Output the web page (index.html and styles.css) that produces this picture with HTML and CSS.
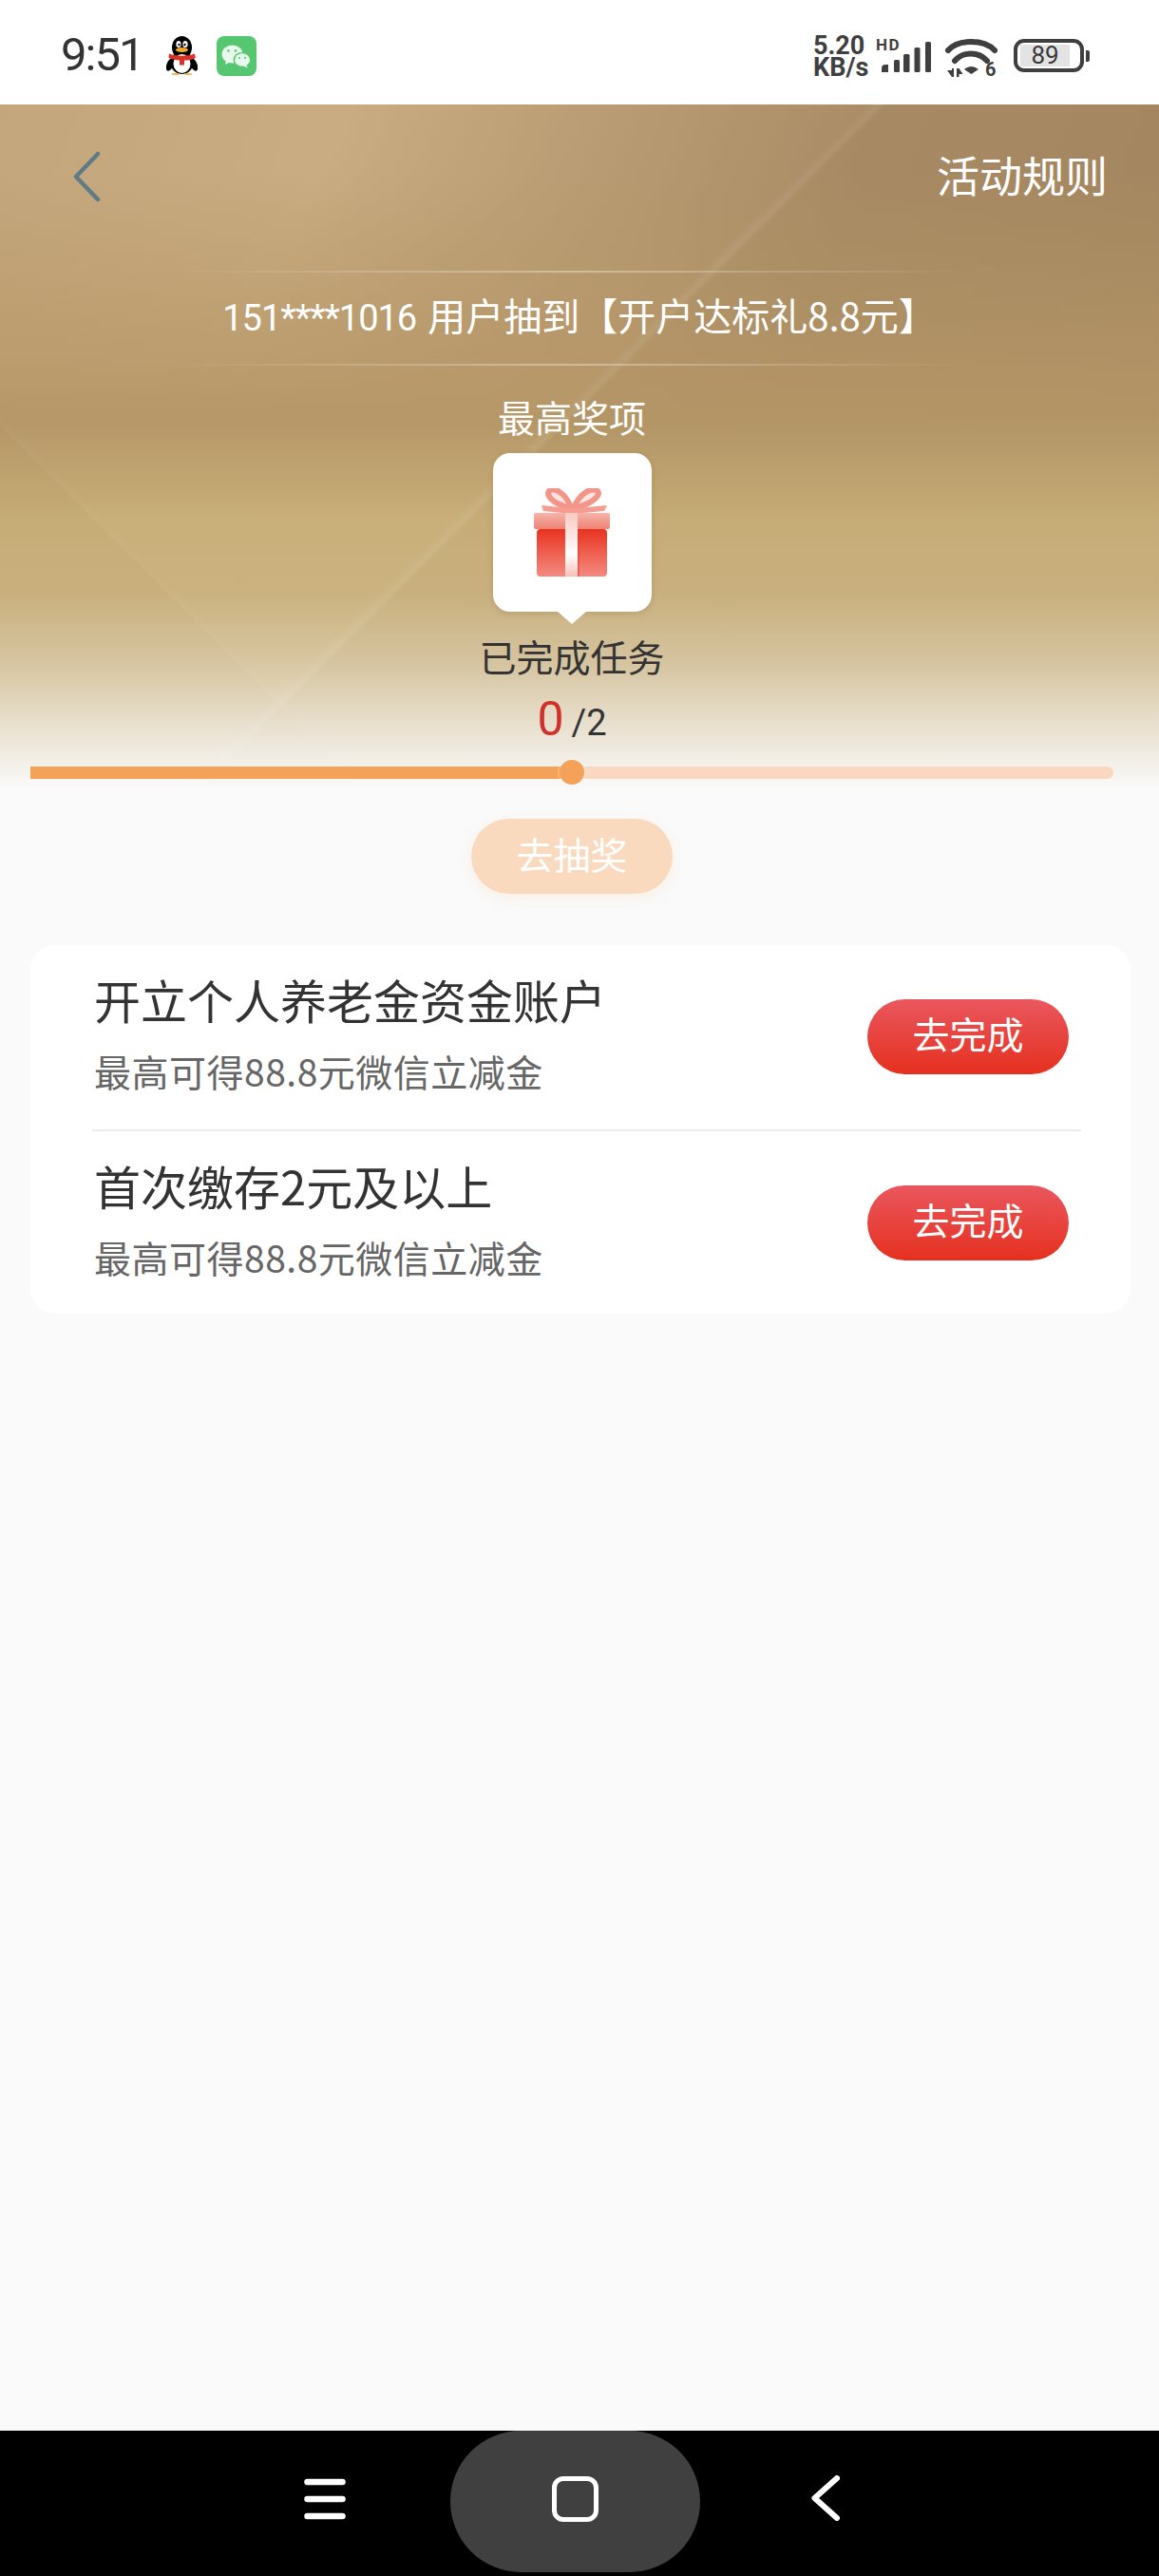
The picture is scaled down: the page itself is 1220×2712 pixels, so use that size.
FILE: index.html
```html
<!DOCTYPE html>
<html lang="zh-CN">
<head>
  <meta charset="UTF-8">
  <title>活动</title>
  <link rel="stylesheet" href="styles.css">
</head>
<body>

  <!-- Statusleiste -->
  <div class="statusBar">
    <div class="statusLeft">
      <span class="clock">9:51</span>
      <svg class="qqIcon" viewBox="0 0 33 41" width="33" height="41">
        <ellipse cx="4" cy="30" rx="3.500" ry="7" fill="#000" transform="rotate(22 4 30)"/>
        <ellipse cx="29" cy="30" rx="3.500" ry="7" fill="#000" transform="rotate(-22 29 30)"/>
        <ellipse cx="16.500" cy="12" rx="10.500" ry="12" fill="#000"/>
        <ellipse cx="16.500" cy="28" rx="12" ry="12" fill="#000"/>
        <ellipse cx="16.500" cy="29" rx="9" ry="10" fill="#fff"/>
        <ellipse cx="13" cy="8.500" rx="2.600" ry="3.600" fill="#fff"/>
        <ellipse cx="20" cy="8.500" rx="2.600" ry="3.600" fill="#fff"/>
        <circle cx="13.500" cy="9" r="1.200" fill="#000"/>
        <circle cx="19.500" cy="9" r="1.200" fill="#000"/>
        <ellipse cx="16.500" cy="14.500" rx="6.500" ry="2.500" fill="#f0a92d"/>
        <path d="M3 18.500c7 3 20 3 27 0l.8 4.500c-3 1.500-6 2.300-8.800 2.500H19v5h-5v-5c-4-.2-7.500-1-11.500-2.500z" fill="#d8332a"/>
        <ellipse cx="10" cy="40" rx="4.500" ry="1" fill="#f0b84a"/>
        <ellipse cx="23" cy="40" rx="4.500" ry="1" fill="#f0b84a"/>
      </svg>
      <svg class="wxIcon" viewBox="0 0 42 42" width="42" height="42">
        <rect width="42" height="42" rx="8" fill="#56c670"/>
        <ellipse cx="16.500" cy="19" rx="11" ry="9.500" fill="#e9f8ec"/>
        <path d="M10 25l-1 5 6-3z" fill="#e9f8ec"/>
        <ellipse cx="27" cy="25" rx="9.500" ry="8" fill="#56c670"/>
        <ellipse cx="27" cy="25" rx="8" ry="6.800" fill="#e9f8ec"/>
        <path d="M31 30l2 3.500-5-2z" fill="#e9f8ec"/>
        <circle cx="12.500" cy="15.500" r="1.300" fill="#56c670"/>
        <circle cx="20" cy="15.500" r="1.300" fill="#56c670"/>
        <circle cx="24" cy="23" r="1.100" fill="#56c670"/>
        <circle cx="30" cy="23" r="1.100" fill="#56c670"/>
      </svg>
    </div>
    <div class="statusRight">
      <div class="netSpeed">5.20<br>KB/s</div>
      <svg class="signalIcon" viewBox="0 0 62 42" width="62" height="42">
        <text x="2" y="15" class="hdText">HD</text>
        <path d="M8 34a4 4 0 0 1 4-4h3v8H8z" fill="#3f3f3f"/>
        <rect x="21" y="25" width="6" height="13" rx="1.500" fill="#3f3f3f"/>
        <rect x="31" y="19" width="6.500" height="19" rx="1.500" fill="#3f3f3f"/>
        <rect x="42.500" y="12" width="6" height="26" rx="1.500" fill="#3f3f3f"/>
        <rect x="54" y="6" width="6" height="32" rx="1.500" fill="#3f3f3f"/>
      </svg>
      <svg class="wifiIcon" viewBox="0 0 56 50" width="56" height="50">
        <path d="M4 15C14 3 42 3 53 15" fill="none" stroke="#3f3f3f" stroke-width="6" stroke-linecap="round"/>
        <path d="M11 26C20 16 36 16 45 26" fill="none" stroke="#3f3f3f" stroke-width="6" stroke-linecap="round"/>
        <path d="M21 35Q28.500 29 36 35L28.500 40z" fill="#3f3f3f"/>
        <path d="M3 36h5v-2h2v9H8z" fill="#3f3f3f"/>
        <path d="M13 34h2.500l4 6h-4v3H13z" fill="#3f3f3f"/>
        <text x="43" y="42" class="wifiSix">6</text>
      </svg>
      <div class="battery">
        <div class="batteryBody"><span class="batteryFill">89</span></div>
        <div class="batteryCap"></div>
      </div>
    </div>
  </div>

  <main class="page">
    <div class="topBar">
      <svg class="backIcon" viewBox="0 0 30 54" width="30" height="54">
        <path d="M27 3L4 27l23 24" fill="none" stroke="#5f7b87" stroke-width="4.500" stroke-linecap="round" stroke-linejoin="round"/>
      </svg>
      <span class="rulesLink">活动规则</span>
    </div>

    <div class="stage">
      <div class="ticker"><span><span class="tickerNum">151****1016</span>&nbsp;用户抽到【开户达标礼8.8元】</span></div>
      <div class="prizeLabel">最高奖项</div>

      <div class="prizeCard">
        <svg viewBox="0 0 80 93" width="80" height="93">
          <defs>
            <linearGradient id="bodyGrad" x1="0" y1="0" x2="0" y2="1">
              <stop offset="0" stop-color="#e8331f"/>
              <stop offset=".5" stop-color="#ee5f50"/>
              <stop offset="1" stop-color="#f38b80"/>
            </linearGradient>
            <linearGradient id="lidGrad" x1="0" y1="0" x2="0" y2="1">
              <stop offset="0" stop-color="#f6b5aa"/>
              <stop offset="1" stop-color="#ee8375"/>
            </linearGradient>
            <linearGradient id="bandGrad" x1="0" y1="0" x2="0" y2="1">
              <stop offset="0" stop-color="#f9c9c1"/>
              <stop offset=".65" stop-color="#fff"/>
              <stop offset="1" stop-color="#f9bfb7"/>
            </linearGradient>
          </defs>
          <path d="M39 21C30 19 17 14 15 6c0-5 7-6 12-2 5 3 10 10 12 17z" fill="#fde6e1" stroke="#f4958a" stroke-width="6" stroke-linejoin="round"/>
          <path d="M42 21C51 19 65 14 68 6c0-5-7-6-13-2-5 3-11 10-13 17z" fill="#fde6e1" stroke="#f4958a" stroke-width="6" stroke-linejoin="round"/>
          <path d="M8 18l30 3h6l33-3-3 6-34 3-30-3z" fill="#f69d92"/>
          <rect x="3" y="43" width="74" height="50" rx="4" fill="url(#bodyGrad)"/>
          <rect y="26" width="80" height="17" rx="2" fill="url(#lidGrad)"/>
          <rect x="33" y="26" width="13" height="67" fill="url(#bandGrad)"/>
          <rect x="46" y="43" width="1.500" height="50" fill="#d9402f" opacity=".6"/>
        </svg>
      </div>

      <div class="taskLabel">已完成任务</div>
      <div class="taskCount"><span class="countDone">0</span><span class="countAll">/2</span></div>

      <div class="progress">
        <div class="progressFill"></div>
        <div class="progressDot"></div>
      </div>

      <button class="drawBtn" type="button">去抽奖</button>
    </div>

    <div class="taskCard">
      <div class="taskRow">
        <div class="taskInfo">
          <div class="taskTitle">开立个人养老金资金账户</div>
          <div class="taskSub">最高可得88.8元微信立减金</div>
        </div>
        <button class="doBtn" type="button">去完成</button>
      </div>
      <div class="taskLine"></div>
      <div class="taskRow">
        <div class="taskInfo">
          <div class="taskTitle">首次缴存2元及以上</div>
          <div class="taskSub">最高可得88.8元微信立减金</div>
        </div>
        <button class="doBtn" type="button">去完成</button>
      </div>
    </div>
  </main>

  <!-- Navigationsleiste -->
  <div class="navBar">
    <svg class="navMenu" viewBox="0 0 44 44" width="44" height="44">
      <path d="M3.500 4h37M3.500 22h37M3.500 40h37" fill="none" stroke="#fff" stroke-width="6.500" stroke-linecap="round"/>
    </svg>
    <div class="navHome">
      <div class="navSquare"></div>
    </div>
    <svg class="navBack" viewBox="0 0 30 48" width="30" height="48">
      <path d="M27 3L3.500 24 27 45" fill="none" stroke="#fff" stroke-width="6" stroke-linecap="round" stroke-linejoin="round"/>
    </svg>
  </div>

</body>
</html>
```

FILE: styles.css
```css
* { box-sizing:border-box; }
html, body { margin:0; padding:0; }
body { width:1220px; height:2712px; display:flex; flex-direction:column; background:#fafafa; color:#333; font-family:"Noto Sans CJK SC", "Noto Sans", sans-serif; }
button { border:none; padding:0; font-family:inherit; color:#fff; }

.statusBar { height:110px; flex:none; display:flex; justify-content:space-between; background:#fff; padding:38px 73px 0 64px; }
.statusLeft { display:flex; align-items:flex-start; }
.clock { font-family:Roboto, sans-serif; font-size:49px; line-height:40px; color:#333; letter-spacing:-2px; width:111px; }
.qqIcon { margin:0 20px 0 0; }
.statusRight { display:flex; align-items:flex-start; }
.netSpeed { width:64px; font-family:Roboto, sans-serif; font-weight:700; font-size:27px; line-height:23px; color:#3f3f3f; margin-top:-1px; }
.signalIcon { margin-right:12px; }
.hdText { font-family:Roboto, sans-serif; font-weight:700; font-size:17px; letter-spacing:1.5px; fill:#3f3f3f; }
.wifiIcon { margin-right:17px; }
.wifiSix { font-family:Roboto, sans-serif; font-weight:700; font-size:20px; fill:#3f3f3f; }
.battery { display:flex; align-items:center; height:35px; margin-top:3px; }
.batteryBody { width:74px; height:35px; border:4px solid #3f3f3f; border-radius:11px; padding:2px 0 2px 3px; }
.batteryFill { display:block; width:52px; height:23px; background:#e3e3e3; text-align:center; font-family:Roboto, sans-serif; font-size:26px; line-height:23px; color:#3a3a3a; }
.batteryCap { width:4px; height:12px; margin-left:2px; background:#3f3f3f; border-radius:0 2px 2px 0; }

/* Hintergrund nur fuer die oberen 720px: Ausblendung, Facetten, Gold, Basis */
.page { flex:1; background-repeat:no-repeat; background-size:100% 720px;
  background-image:
    linear-gradient(180deg, rgba(250,250,250,0) 420px, rgba(250,250,250,.06) 515px, rgba(250,250,250,.33) 590px, rgba(250,250,250,.7) 660px, #fafafa 720px),
    linear-gradient(135deg, rgba(255,255,255,0) 645px, rgba(255,255,255,.07) 655px, rgba(100,75,45,.03) 660px, rgba(100,75,45,.03) 100%),
    linear-gradient(45deg, rgba(150,120,70,.05) 268px, rgba(255,255,255,.025) 272px, rgba(255,255,255,0) 278px),
    linear-gradient(180deg, rgba(182,152,104,0) 70px, #b69868 335px, #c8ae78 435px, #c8ae78 720px),
    linear-gradient(112deg, #c4a67d 0, #c9ac81 24%, #a98b65 62%, #a4865f 100%);
}
.topBar { height:152px; display:flex; justify-content:space-between; align-items:center; padding:0 54px 0 76px; }
.rulesLink { font-size:45px; padding-bottom:6px; color:#fff; }
.stage { width:1140px; margin:23px 0 0 32px; display:flex; flex-direction:column; align-items:center; }
.ticker { width:850px; height:100px; display:flex; align-items:center; justify-content:center; padding:0 0 9px 16px; font-size:40px; color:#fff; white-space:nowrap;
  border-style:solid; border-width:2px 0; border-image:linear-gradient(90deg, rgba(255,255,255,0), rgba(255,255,255,.35) 50%, rgba(255,255,255,0)) 1; }
.tickerNum { font-family:Roboto, sans-serif; font-size:38px; letter-spacing:-1px; margin-right:3px; }
.prizeLabel { margin-top:28px; font-size:39px; line-height:50px; color:#fff; }
.prizeCard { position:relative; width:167px; height:167px; margin-top:14px; display:flex; align-items:center; justify-content:center; background:#fff; border-radius:18px; box-shadow:0 2px 6px rgba(130,100,60,.25); }
.prizeCard::after { content:""; position:absolute; left:50%; bottom:-13px; margin-left:-15px; border-style:solid; border-width:13px 15px 0; border-color:#fff transparent transparent; }
.taskLabel { margin-top:21px; font-size:39px; line-height:50px; color:#333; }
.taskCount { margin-top:17px; height:50px; display:flex; align-items:baseline; justify-content:center; line-height:50px; font-family:Roboto, sans-serif; }
.countDone { font-size:50px; color:#d0312b; margin-right:8px; }
.countAll { font-size:38px; color:#333; }
.progress { position:relative; width:100%; height:13px; margin-top:25px; background:#f9d8bf; border-radius:0 7px 7px 0; }
.progressFill { width:50%; height:100%; background:#f4a259; border-radius:0 7px 7px 0; }
.progressDot { position:absolute; left:50%; top:-7px; width:26px; height:26px; margin-left:-13px; background:#f4a259; border-radius:50%; box-shadow:0 0 0 2px #fafafa33; }
.drawBtn { width:212px; height:79px; margin-top:42px; padding-bottom:7px; background:#f9dabe; border-radius:40px; font-size:39px; box-shadow:0 4px 14px rgba(249,218,190,.35); }

.taskCard { width:1158px; margin:54px 0 0 32px; background:#fff; border-radius:26px; }
.taskRow { display:flex; justify-content:space-between; align-items:center; padding:27px 65px 32px 67px; }
.taskRow:last-child { padding-bottom:30px; }
.taskTitle { font-size:49px; line-height:60px; color:#333; }
.taskSub { margin-top:15px; font-size:39px; letter-spacing:.5px; line-height:60px; color:#666; }
.taskLine { height:2px; margin:0 52px 0 65px; background:#ececec; }
.doBtn { width:212px; height:79px; margin-top:3px; padding-bottom:8px; background:linear-gradient(180deg, #ea575e, #e5301f); border-radius:40px; font-size:39px; }

.navBar { height:153px; flex:none; display:flex; background:#000; padding-left:320px; overflow:hidden; }
.navMenu { margin:50px 110px 0 0; }
.navHome { width:263px; height:149px; display:flex; align-items:center; justify-content:center; background:#404040; border-radius:76px; padding-bottom:5px; }
.navSquare { width:49px; height:48px; border:5px solid #fff; border-radius:12px; }
.navBack { margin:47px 0 0 117px; }
```
